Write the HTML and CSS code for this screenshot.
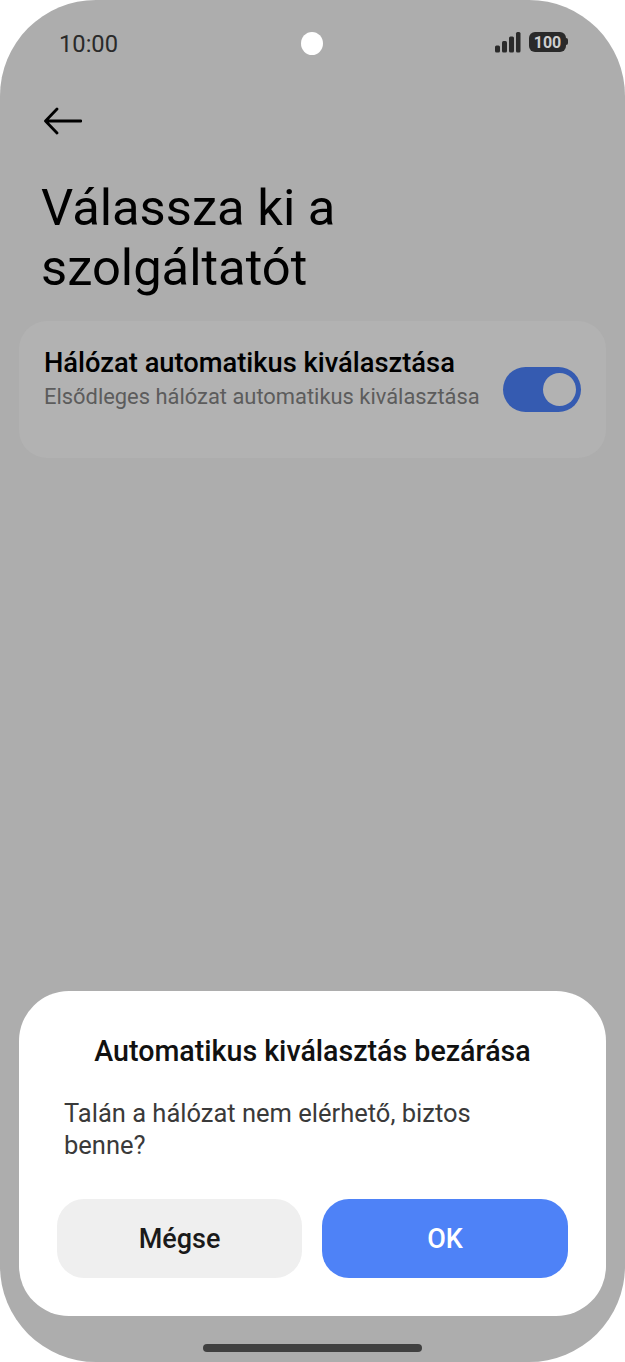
FILE: index.html
```html
<!DOCTYPE html>
<html lang="hu">
<head>
  <meta charset="UTF-8" />
  <title>Szolgáltató</title>
  <link rel="stylesheet" href="styles.css">
</head>
<body>
  <div class="phone">
    <div class="status-bar">
      <span class="time">10:00</span>
      <div class="status-icons">
        <svg class="signal" width="26" height="21" viewBox="0 0 26 21">
          <rect x="0" y="13.5" width="5" height="7" rx="1.5" />
          <rect x="7" y="9" width="5" height="11.500" rx="1.5" />
          <rect x="14" y="4.500" width="5" height="16" rx="1.5" />
          <rect x="21" y="0" width="4.500" height="20.500" rx="1.500" />
        </svg>
        <div class="battery"><span>100</span></div>
      </div>
    </div>
    <div class="camera"></div>

    <div class="back">
      <svg width="38" height="28" viewBox="0 0 38 28">
        <path d="M37 14H2M13 2 1.500 14 13 26" fill="none" stroke="#000" stroke-width="2.800" stroke-linecap="round" stroke-linejoin="round" />
      </svg>
    </div>

    <h1 class="title">Válassza ki a szolgáltatót</h1>

    <div class="card">
      <div class="card-text">
        <div class="card-title">Hálózat automatikus kiválasztása</div>
        <div class="card-sub">Elsődleges hálózat automatikus kiválasztása</div>
      </div>
      <div class="switch"><div class="knob"></div></div>
    </div>

    <div class="spacer"></div>

    <div class="dialog">
      <h2 class="dialog-title">Automatikus kiválasztás bezárása</h2>
      <p class="dialog-text">Talán a hálózat nem elérhető, biztos benne?</p>
      <div class="dialog-buttons">
        <button class="btn btn-cancel">Mégse</button>
        <button class="btn btn-ok">OK</button>
      </div>
    </div>

    <div class="home-area"><div class="home-bar"></div></div>
  </div>
</body>
</html>
```

FILE: styles.css
```css
* {
  box-sizing: border-box;
  margin: 0;
  padding: 0;
}

body {
  background: #fff;
  font-family: Roboto, sans-serif;
}

.phone {
  position: relative;
  width: 625px;
  height: 1362px;
  background: #adadad;
  border-radius: 96px;
  display: flex;
  flex-direction: column;
  overflow: hidden;
}

.status-bar {
  display: flex;
  justify-content: space-between;
  align-items: center;
  height: 32px;
  margin-top: 27px;
  padding: 0 59px 0 59px;
}

.time {
  margin-top: 2px;
  font-size: 23.700px;
  color: #2a2a2a;
}

.status-icons {
  display: flex;
  align-items: center;
  gap: 8px;
  margin-top: -2px;
}

.signal {
  fill: #2a2a2a;
}

.battery {
  position: relative;
  width: 37px;
  height: 20px;
  background: #2a2a2a;
  border-radius: 6px;
  display: flex;
  align-items: center;
  justify-content: center;
}

.battery::after {
  content: "";
  position: absolute;
  right: -2px;
  top: 6px;
  width: 2px;
  height: 7px;
  background: #2a2a2a;
  border-radius: 0 2px 2px 0;
}

.battery span {
  font-size: 16px;
  font-weight: 700;
  color: #cfcfcf;
}

.camera {
  position: absolute;
  left: 301px;
  top: 32px;
  width: 22px;
  height: 23px;
  background: #fff;
  border-radius: 50%;
}

.back {
  margin: 48px 0 0 44px;
  height: 28px;
}

.title {
  margin: 43px 40px 0 41px;
  font-size: 50.700px;
  font-weight: 400;
  line-height: 60px;
  color: #000;
}

.card {
  display: flex;
  align-items: flex-start;
  justify-content: space-between;
  height: 137px;
  margin: 23px 19px 0;
  padding: 27px 25px 0;
  background: #b2b2b2;
  border-radius: 28px;
}

.card-title {
  font-size: 27.300px;
  font-weight: 500;
  line-height: 30px;
  color: #000;
  white-space: nowrap;
}

.card-sub {
  margin-top: 5px;
  font-size: 21.900px;
  line-height: 28px;
  color: #5c5c5c;
  white-space: nowrap;
}

.switch {
  width: 78px;
  height: 45px;
  margin-top: 19px;
  padding: 6px 5px;
  display: flex;
  justify-content: flex-end;
  background: #355bb1;
  border-radius: 23px;
  flex-shrink: 0;
}

.knob {
  width: 33px;
  height: 33px;
  background: #b2b2b2;
  border-radius: 50%;
}

.spacer {
  flex: 1;
}

.dialog {
  margin: 0 19px;
  height: 325px;
  padding: 43px 38px 0;
  background: #fff;
  border-radius: 50px;
}

.dialog-title {
  font-size: 28.600px;
  font-weight: 500;
  line-height: 34px;
  text-align: center;
  color: #111;
  white-space: nowrap;
}

.dialog-text {
  margin: 29px 40px 0 7px;
  font-size: 25.500px;
  line-height: 32px;
  color: #3a3a3a;
}

.dialog-buttons {
  display: flex;
  gap: 20px;
  margin-top: 38px;
}

.btn {
  height: 79px;
  border: none;
  border-radius: 27px;
  font-family: Roboto, sans-serif;
  font-size: 27px;
  font-weight: 500;
}

.btn-cancel {
  width: 245px;
  background: #efefef;
  color: #1a1a1a;
}

.btn-ok {
  flex: 1;
  background: #4e82f7;
  color: #fff;
}

.home-area {
  height: 46px;
  padding-top: 28px;
  display: flex;
  justify-content: center;
}

.home-bar {
  width: 219px;
  height: 8px;
  background: #404040;
  border-radius: 4px;
}
```
